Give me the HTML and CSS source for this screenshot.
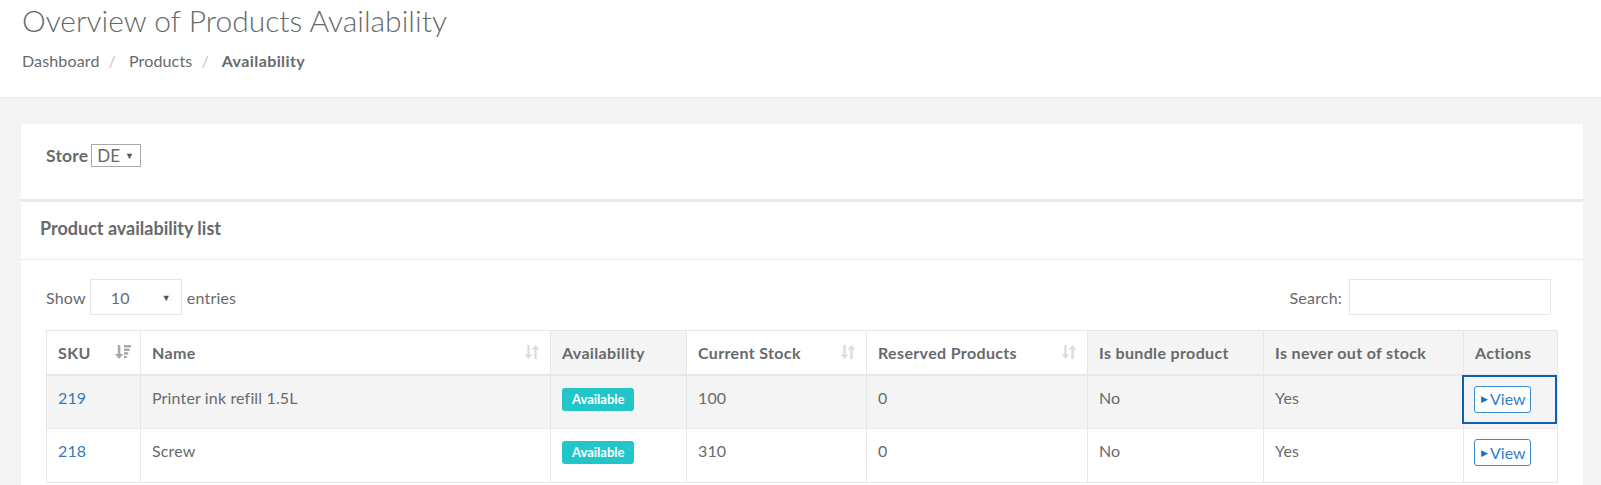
FILE: index.html
```html
<!DOCTYPE html>
<html lang="en">
<head>
<meta charset="utf-8">
<title>Overview of Products Availability</title>
<link rel="stylesheet" href="styles.css">
</head>
<body>
<header class="page-heading">
  <h1 class="page-title">Overview of Products Availability</h1>
  <ol class="breadcrumb">
    <li class="crumb">Dashboard</li>
    <li class="sep">/</li>
    <li class="crumb">Products</li>
    <li class="sep">/</li>
    <li class="crumb active">Availability</li>
  </ol>
</header>

<main class="wrapper">
  <section class="box box-store">
    <label class="store-label">Store</label>
    <span class="store-select"><span>DE</span><span class="caret-down">▼</span></span>
  </section>

  <section class="box box-list">
    <div class="box-title">Product availability list</div>
    <div class="box-content">
      <div class="dt-top">
        <div class="dt-length">
          <span>Show</span>
          <span class="length-select"><span>10</span><span class="caret-down">▼</span></span>
          <span>entries</span>
        </div>
        <div class="dt-search">
          <span>Search:</span>
          <span class="search-input"></span>
        </div>
      </div>

      <table class="table">
        <colgroup>
          <col class="c-sku"><col class="c-name"><col class="c-avail"><col class="c-stock">
          <col class="c-res"><col class="c-bundle"><col class="c-never"><col class="c-actions">
        </colgroup>
        <thead>
          <tr>
            <th class="sortable">SKU
              <svg class="sort-icon sorted" viewBox="0 0 16 16"><path d="M2.8 1h2.6v9h2.8L4.1 15 0 10h2.8z"/><rect x="9" y="1" width="7" height="2.4"/><rect x="9" y="4.6" width="5.6" height="2.4"/><rect x="9" y="8.2" width="4.2" height="2.4"/><rect x="9" y="11.8" width="2.8" height="2.4"/></svg>
            </th>
            <th class="sortable">Name
              <svg class="sort-icon" viewBox="0 0 16 16"><path d="M3.3 1h2.4v9.4h2.8L4.5 15 0.5 10.4h2.8z"/><path d="M10.3 15h2.4V5.6h2.8L11.5 1 7.5 5.6h2.8z"/></svg>
            </th>
            <th>Availability</th>
            <th class="sortable">Current Stock
              <svg class="sort-icon" viewBox="0 0 16 16"><path d="M3.3 1h2.4v9.4h2.8L4.5 15 0.5 10.4h2.8z"/><path d="M10.3 15h2.4V5.6h2.8L11.5 1 7.5 5.6h2.8z"/></svg>
            </th>
            <th class="sortable">Reserved Products
              <svg class="sort-icon" viewBox="0 0 16 16"><path d="M3.3 1h2.4v9.4h2.8L4.5 15 0.5 10.4h2.8z"/><path d="M10.3 15h2.4V5.6h2.8L11.5 1 7.5 5.6h2.8z"/></svg>
            </th>
            <th>Is bundle product</th>
            <th>Is never out of stock</th>
            <th>Actions</th>
          </tr>
        </thead>
        <tbody>
          <tr class="odd">
            <td><a class="link" href="#">219</a></td>
            <td>Printer ink refill 1.5L</td>
            <td><span class="badge">Available</span></td>
            <td>100</td>
            <td>0</td>
            <td>No</td>
            <td>Yes</td>
            <td class="focused"><a class="btn-view" href="#"><span class="tri">▶</span>View</a></td>
          </tr>
          <tr>
            <td><a class="link" href="#">218</a></td>
            <td>Screw</td>
            <td><span class="badge">Available</span></td>
            <td>310</td>
            <td>0</td>
            <td>No</td>
            <td>Yes</td>
            <td><a class="btn-view" href="#"><span class="tri">▶</span>View</a></td>
          </tr>
        </tbody>
      </table>
    </div>
  </section>
</main>
</body>
</html>
```

FILE: styles.css
```css
* { box-sizing: border-box; }

html, body {
  margin: 0;
  padding: 0;
}

body {
  font-family: Lato, "Open Sans", sans-serif;
  font-size: 16px;
  color: #676a6c;
  background: #f3f3f4;
}

.page-heading {
  background: #fff;
  height: 98px;
  border-bottom: 1px solid #e7eaec;
  padding: 4px 22px 0;
}

.page-title {
  margin: 0;
  font-size: 30px;
  line-height: 33px;
  font-weight: 300;
  color: #676a6c;
}

.breadcrumb {
  list-style: none;
  margin: 14px 0 0;
  padding: 0;
  display: flex;
  font-size: 16px;
  line-height: 20px;
  letter-spacing: 0.15px;
}

.sep {
  color: #c4c4c4;
  padding: 0 13px 0 9px;
}

.active { font-weight: 700; letter-spacing: 0.4px; }

.wrapper {
  padding: 26px 18px 20px 21px;
}

.box {
  background: #fff;
}

.box-store {
  display: flex;
  align-items: center;
  padding: 20px 25px 32px;
  height: 75px;
}

.store-label {
  font-weight: 700;
  font-size: 17.5px;
  letter-spacing: 0.2px;
  margin-right: 3px;
}

.store-select {
  display: inline-flex;
  align-items: center;
  height: 23px;
  width: 50px;
  border: 1px solid #a9a9a9;
  padding: 0 5px;
  font-size: 17px;
  gap: 5px;
}

.caret-down {
  font-size: 9px;
  color: #555;
}

.box-list {
  border-top: 3px solid #e7eaec;
}

.box-title {
  height: 58px;
  border-bottom: 1px solid #e7eaec;
  padding: 15px 19px 0;
  font-size: 18px;
  line-height: 22px;
  font-weight: 700;
}

.box-content {
  padding: 19px 26px 20px 25px;
}

.dt-top {
  display: flex;
  justify-content: space-between;
  align-items: center;
  margin-bottom: 15px;
}

.dt-length, .dt-search {
  display: flex;
  align-items: center;
  font-size: 16px;
  letter-spacing: 0.2px;
}

.length-select {
  display: inline-flex;
  justify-content: space-between;
  align-items: center;
  width: 92px;
  height: 36px;
  border: 1px solid #e5e6e7;
  margin: 0 5px 0 4px;
  padding: 1px 10px 0 20px;
}

.search-input {
  display: inline-block;
  width: 202px;
  height: 36px;
  border: 1px solid #e5e6e7;
  margin: 0 6px 0 7px;
}

.table {
  width: 100%;
  border-collapse: collapse;
  table-layout: fixed;
  font-size: 16px;
  letter-spacing: 0.15px;
}

.c-sku { width: 94px; }
.c-name { width: 410px; }
.c-avail { width: 136px; }
.c-stock { width: 180px; }
.c-res { width: 221px; }
.c-bundle { width: 176px; }
.c-never { width: 200px; }
.c-actions { width: 94px; }

.table th, .table td {
  border: 1px solid #e7e7e7;
  padding: 0 11px;
  text-align: left;
}

.table th {
  height: 44px;
  font-weight: 700;
  letter-spacing: 0.35px;
  background: #f4f4f4;
  position: relative;
  border-bottom-width: 2px;
}

.table th.sortable { background: #fff; }

.sort-icon {
  position: absolute;
  right: 10px;
  top: 13px;
  width: 16px;
  height: 16px;
  fill: #dcdcdc;
}

.sort-icon.sorted { fill: #a8a8a8; right: 9px; }

.table td {
  height: 54px;
  vertical-align: top;
  padding-top: 12px;
  line-height: 20px;
}

.table tr.odd td { background: #f4f4f4; }

.link {
  color: #337ab7;
  text-decoration: none;
}

.badge {
  display: inline-block;
  vertical-align: top;
  background: #23c6c8;
  color: #fff;
  font-weight: 700;
  font-size: 13px;
  letter-spacing: 0;
  line-height: 23px;
  height: 23px;
  padding: 0 10px;
  border-radius: 3px;
}

.focused { position: relative; }

.focused::after {
  content: "";
  position: absolute;
  left: -2px;
  top: -1px;
  right: 0;
  bottom: 4px;
  border: 2px solid #0b61b0;
  pointer-events: none;
}

.btn-view {
  display: inline-flex;
  align-items: center;
  vertical-align: top;
  height: 27px;
  padding: 0 4px 0 6px;
  border: 1px solid #3d8bd1;
  border-radius: 3px;
  color: #2f7fcc;
  text-decoration: none;
  background: #fff;
  font-size: 16px;
  letter-spacing: 0;
}

.tri {
  font-size: 9px;
  margin-right: 2px;
  color: #1f6fbf;
}

.table td:last-child { padding-left: 10px; }
.table tr td:last-child { padding-top: 10px; }
```
